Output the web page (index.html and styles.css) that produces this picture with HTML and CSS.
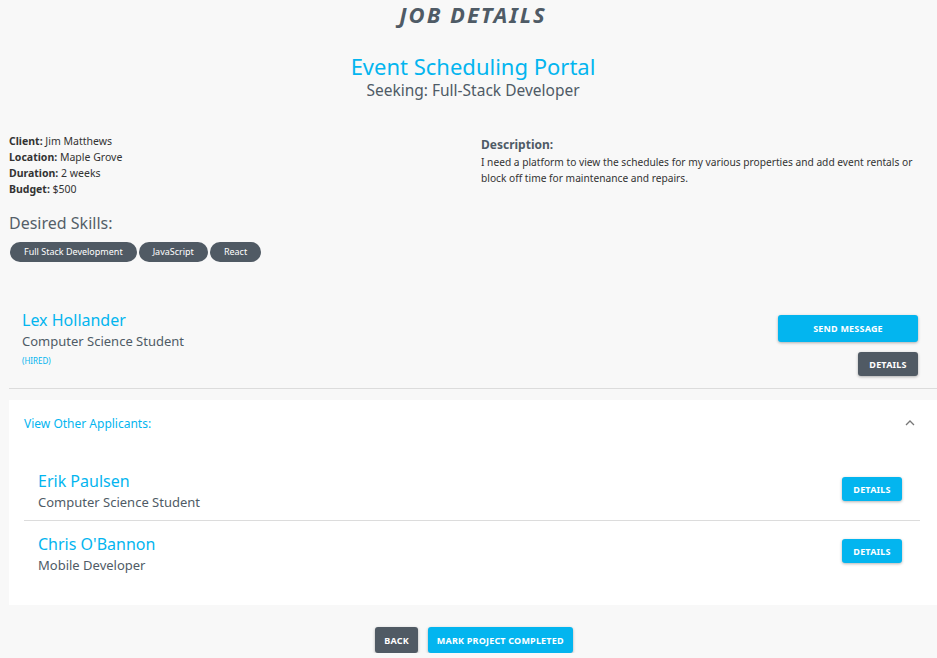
FILE: index.html
```html
<!DOCTYPE html>
<html>
<head>
<meta charset="utf-8">
<link rel="stylesheet" href="styles.css">
</head>
<body>
<div class="page">
  <h1 class="page-title">JOB DETAILS</h1>
  <div class="job-head">
    <div class="job-name">Event Scheduling Portal</div>
    <div class="job-seeking">Seeking: Full-Stack Developer</div>
  </div>
  <div class="info">
    <div class="info-left">
      <div class="meta"><b>Client:</b> Jim Matthews</div>
      <div class="meta"><b>Location:</b> Maple Grove</div>
      <div class="meta"><b>Duration:</b> 2 weeks</div>
      <div class="meta"><b>Budget:</b> $500</div>
      <div class="skills-title">Desired Skills:</div>
      <div class="chips">
        <span class="chip">Full Stack Development</span>
        <span class="chip">JavaScript</span>
        <span class="chip">React</span>
      </div>
    </div>
    <div class="info-right">
      <div class="desc-title">Description:</div>
      <div class="desc">I need a platform to view the schedules for my various properties and add event rentals or block off time for maintenance and repairs.</div>
    </div>
  </div>
  <div class="hired">
    <div class="person">
      <div class="person-name">Lex Hollander</div>
      <div class="person-role">Computer Science Student</div>
      <div class="hired-tag">(HIRED)</div>
    </div>
    <div class="hired-actions">
      <button class="btn btn-cyan btn-wide">SEND MESSAGE</button>
      <button class="btn btn-dark">DETAILS</button>
    </div>
  </div>
  <div class="panel">
    <div class="panel-head">
      <span class="panel-title">View Other Applicants:</span>
      <svg class="chev" width="10" height="6" viewBox="0 0 10 6"><path d="M1 5 L5 1 L9 5" fill="none" stroke="#777" stroke-width="1.3"/></svg>
    </div>
    <div class="applicants">
      <div class="applicant">
        <div class="person">
          <div class="person-name">Erik Paulsen</div>
          <div class="person-role">Computer Science Student</div>
        </div>
        <button class="btn btn-cyan">DETAILS</button>
      </div>
      <div class="applicant">
        <div class="person">
          <div class="person-name">Chris O'Bannon</div>
          <div class="person-role">Mobile Developer</div>
        </div>
        <button class="btn btn-cyan">DETAILS</button>
      </div>
    </div>
  </div>
  <div class="footer">
    <button class="btn btn-dark btn-foot">BACK</button>
    <button class="btn btn-cyan btn-foot">MARK PROJECT COMPLETED</button>
  </div>
</div>
</body>
</html>
```
FILE: styles.css
```css
* { box-sizing: border-box; }
html, body { margin: 0; padding: 0; background: #f8f8f8; }
body { font-family: "Noto Sans", "Open Sans", sans-serif; color: #4f5b66; }
.page { padding: 0 0 0 9px; width: 937px; }
.page-title {
  margin: 0; padding-top: 2px; text-align: center; font-size: 22px; font-style: italic;
  font-weight: 700; letter-spacing: 2px; line-height: 24px; color: #4f5b66;
}
.job-head { text-align: center; margin-top: 26px; }
.job-name { font-size: 22px; color: #03b5ef; line-height: 28px; }
.job-seeking { font-size: 15.5px; line-height: 20px; color: #4f5b66; }
.info { display: grid; grid-template-columns: 1fr 1fr; margin-top: 33px; }
.meta { font-size: 10.5px; line-height: 16px; color: #333; }
.meta b { font-weight: 700; }
.skills-title { font-size: 16px; line-height: 20px; margin-top: 16px; color: #555f69; }
.chips { display: flex; gap: 2px; margin-top: 9px; padding-left: 1px; }
.chip {
  background: #505a64; color: #fff; font-size: 9px; height: 20px; line-height: 20px;
  padding: 0 14px; border-radius: 10px;
}
.info-right { padding-left: 8px; padding-top: 2px; }
.desc-title { font-size: 12px; font-weight: 700; line-height: 19px; color: #4f5b66; }
.desc { font-size: 10.2px; line-height: 16px; color: #333; padding-right: 10px; }
.hired {
  display: flex; justify-content: space-between; margin-top: 47px; padding: 0 19px 12px 13px;
  border-bottom: 1px solid #dcdcdc;
}
.person-name { font-size: 16px; color: #03b5ef; line-height: 22px; }
.person-role { font-size: 13px; color: #4f5b66; line-height: 21px; }
.hired-tag { font-size: 8px; color: #03b5ef; line-height: 17px; }
.hired-actions { display: flex; flex-direction: column; align-items: flex-end; gap: 10px; padding-top: 6px; }
.btn {
  border: none; border-radius: 3px; font-family: inherit; font-weight: 700; font-size: 9px;
  color: #fff; height: 25px; padding: 0 11px; box-shadow: 0 1px 3px rgba(0,0,0,0.3);
  letter-spacing: 0.2px;
}
.btn-cyan { background: #03b5ef; }
.btn-dark { background: #505a64; }
.btn-wide { width: 140px; height: 27px; }
.hired-actions .btn-dark { width: 60px; height: 24px; padding: 0; }
.panel { background: #fff; margin-top: 11px; padding: 0 17px 14px 15px; }
.panel-head { display: flex; justify-content: space-between; align-items: center; height: 46px; padding-right: 5px; }
.panel-title { font-size: 12px; color: #03b5ef; }
.applicants { padding-top: 16px; }
.applicant {
  display: flex; justify-content: space-between; align-items: flex-start; padding: 8px 18px 7px 14px;
}
.applicant + .applicant { border-top: 1px solid #dcdcdc; padding-top: 12px; padding-bottom: 15px; }
.applicant .btn { width: 60px; height: 24px; padding: 0; margin-top: 7px; }
.applicant + .applicant .btn { margin-top: 6px; }
.footer { display: flex; justify-content: center; gap: 10px; margin-top: 22px; padding-left: 2px; }
.btn-foot { height: 26px; padding: 0 9px; }
```
